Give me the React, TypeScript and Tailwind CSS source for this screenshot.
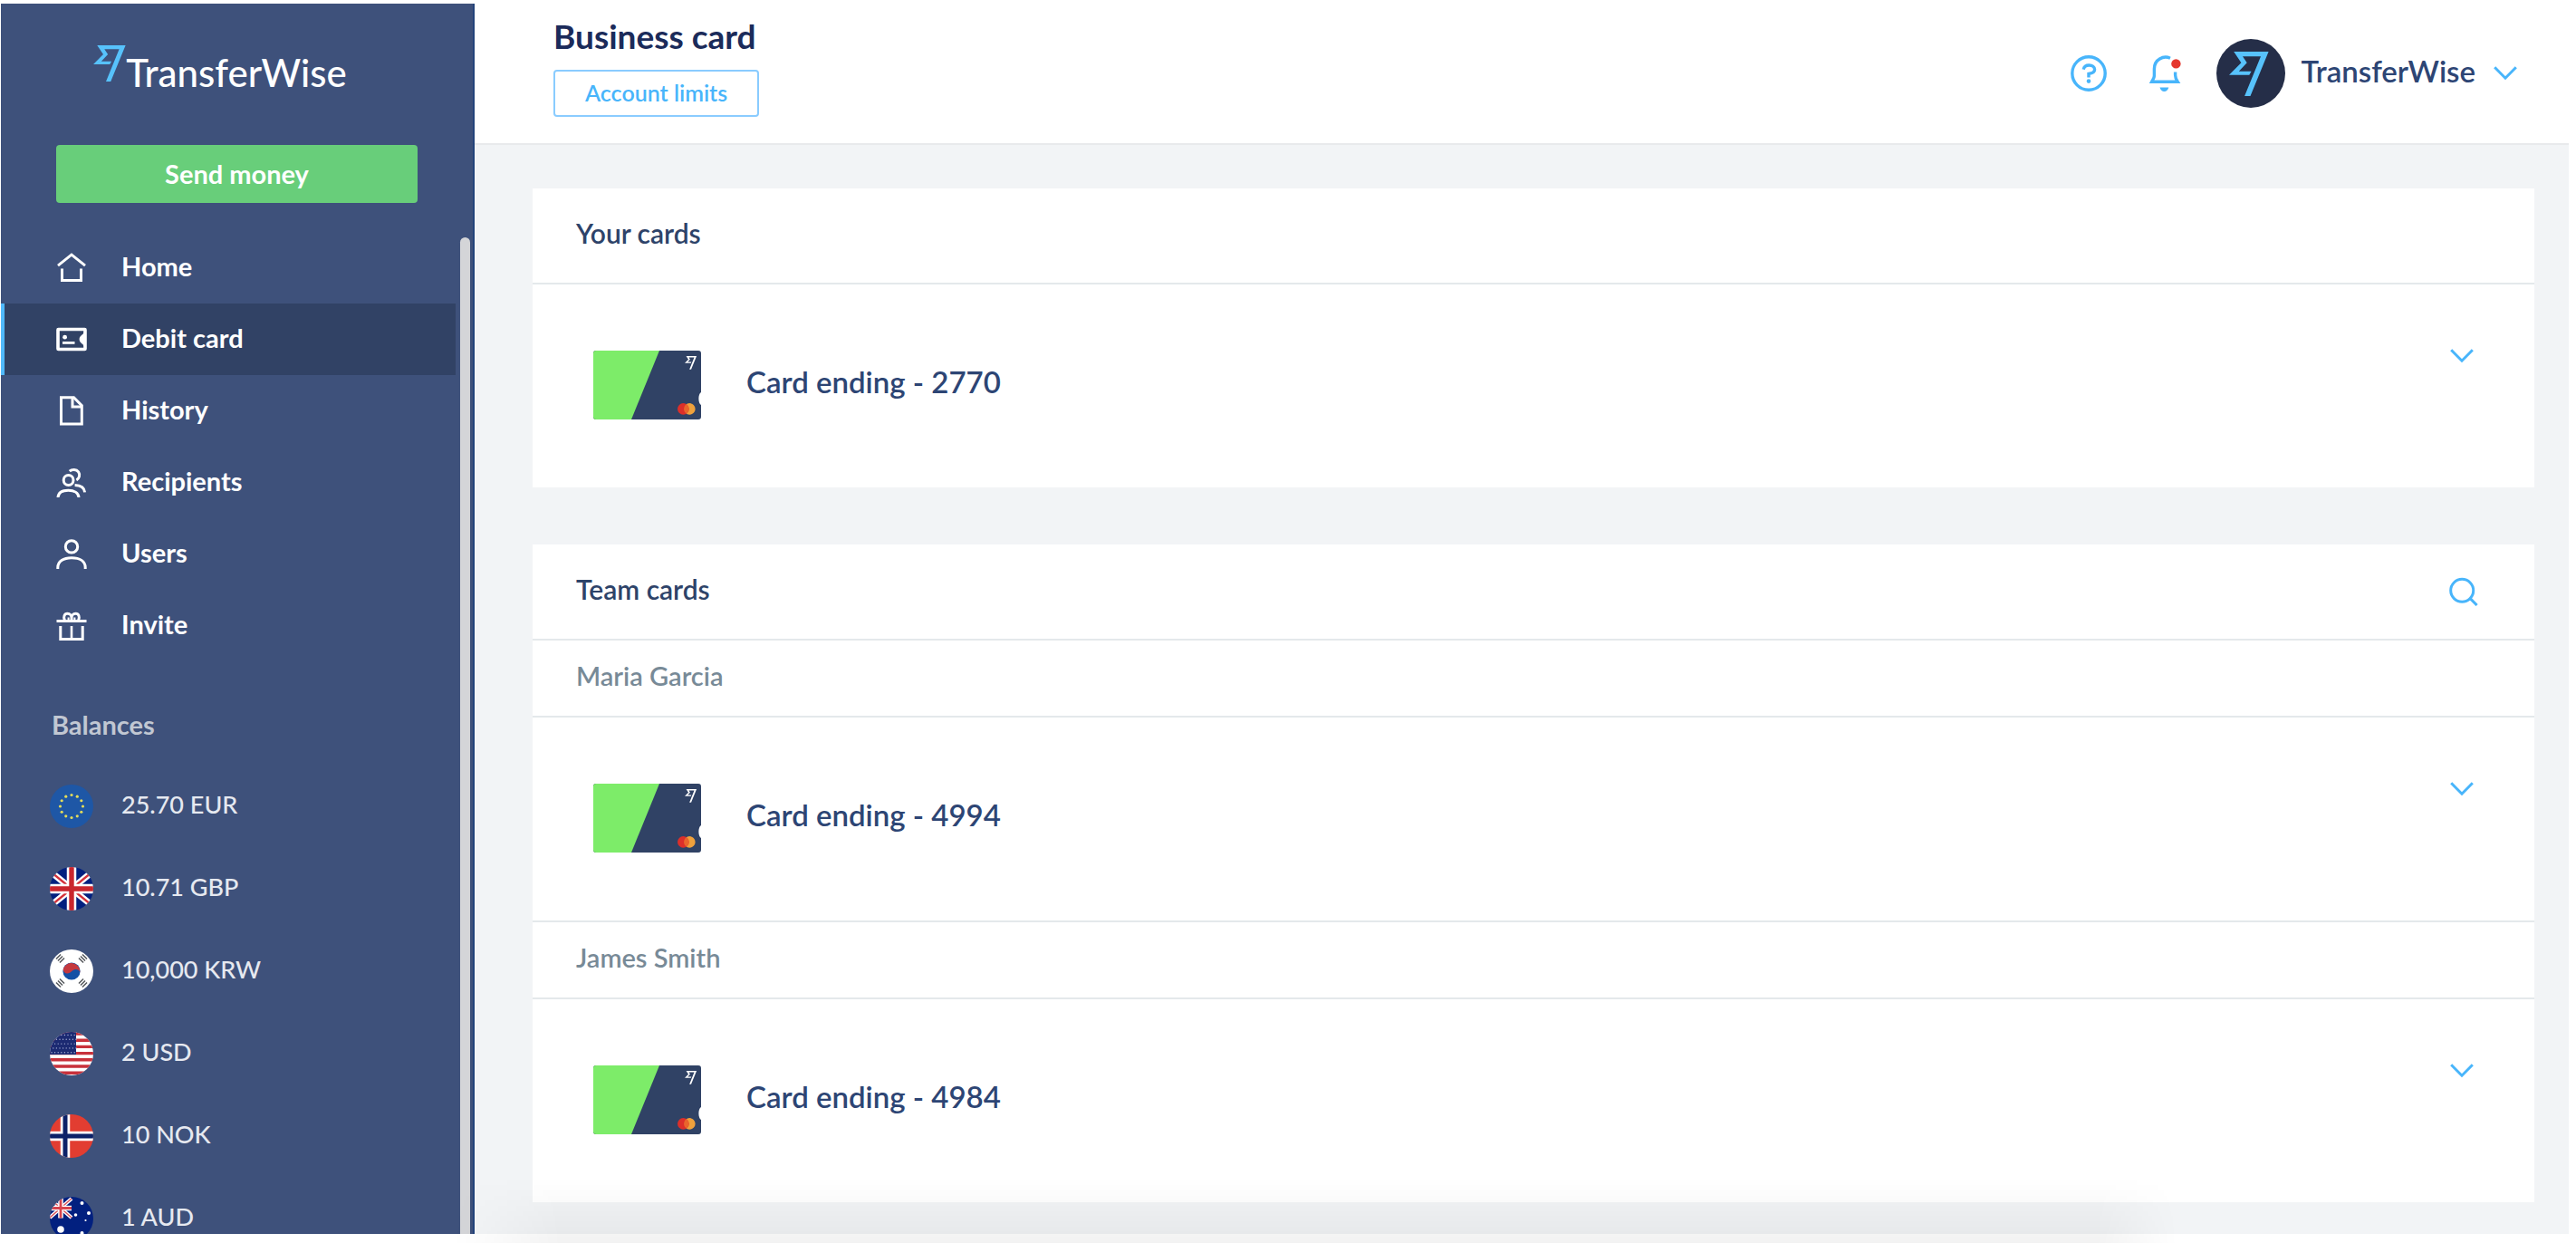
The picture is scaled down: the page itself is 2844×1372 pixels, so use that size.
import { useState } from 'react'
import type { ReactNode } from 'react'

const MARK_PATH =
  'M5.2 0H43.6L23.5 49H17.1L35 5.3H15L19.7 12.3L10.8 21.7H24.6L22.3 25.7H0L13.4 12.3Z'

function BrandMark({ className }: { className: string }) {
  return (
    <svg viewBox="0 0 44 49" className={className} fill="currentColor" aria-hidden="true">
      <path d={MARK_PATH} />
    </svg>
  )
}

function NavIcon({ children }: { children: ReactNode }) {
  return (
    <svg
      viewBox="0 0 34 34"
      className="w-[34px] h-[34px] shrink-0"
      fill="none"
      stroke="currentColor"
      strokeWidth="3"
      aria-hidden="true"
    >
      {children}
    </svg>
  )
}

const navItems = [
  {
    label: 'Home',
    icon: (
      <NavIcon>
        <path d="M2 14.2L17 2.2L32 14.2" />
        <path d="M6.5 17.5V30.5H27.5V17.5" />
      </NavIcon>
    ),
  },
  {
    label: 'Debit card',
    icon: (
      <NavIcon>
        <rect x="2" y="5.5" width="30" height="22" rx="0.5" strokeWidth="3.6" />
        <circle cx="9.6" cy="14.2" r="2.4" fill="currentColor" stroke="none" />
        <path d="M7 20.4H20.5" strokeWidth="2.8" />
        <path d="M31 7.5C31 11.5 25.6 12 25.6 16.5S31 21.5 31 25.5Z" fill="currentColor" stroke="none" />
      </NavIcon>
    ),
  },
  {
    label: 'History',
    icon: (
      <NavIcon>
        <path d="M5.5 1.8H19.5L28.3 10.6V31H5.5Z" />
        <path d="M18 2.3V12H28" />
      </NavIcon>
    ),
  },
  {
    label: 'Recipients',
    icon: (
      <NavIcon>
        <circle cx="13.6" cy="14" r="5.4" />
        <path d="M2 33C2.4 27.8 7 25.2 13.4 25.2S24.6 27.8 25 33" />
        <path d="M14.8 4.2C17.5 1.6 22.4 1.8 24.6 4.8C26.8 8 25.6 12.2 22.4 13.8" />
        <path d="M20.6 19.4C26.8 19.6 31.2 22.4 31.6 27.4" />
      </NavIcon>
    ),
  },
  {
    label: 'Users',
    icon: (
      <NavIcon>
        <circle cx="17" cy="8.4" r="6.7" />
        <path d="M1.8 33V31.6C1.8 24.6 8 20.8 17 20.8S32.2 24.6 32.2 31.6V33" />
      </NavIcon>
    ),
  },
  {
    label: 'Invite',
    icon: (
      <NavIcon>
        <path d="M0.5 11.5H33.5" />
        <path d="M4.8 17V31.5H29.2V17" />
        <path d="M17 17V31" strokeWidth="2.6" />
        <path d="M9.4 10.6C7.6 7 9.2 3.2 12.4 3.2C15.4 3.2 17 5.4 17 8V11V8C17 5.4 18.6 3.2 21.6 3.2C24.8 3.2 26.4 7 24.6 10.6" />
        <path d="M13.6 10.6V7.6M20.4 10.6V7.6" strokeWidth="2" />
      </NavIcon>
    ),
  },
]

function Flag({ id, children }: { id: string; children: ReactNode }) {
  return (
    <svg viewBox="0 0 48 48" className="w-12 h-12 shrink-0" aria-hidden="true">
      <clipPath id={`flag-${id}`}>
        <circle cx="24" cy="24" r="24" />
      </clipPath>
      <g clipPath={`url(#flag-${id})`}>{children}</g>
    </svg>
  )
}

const euStars = Array.from({ length: 12 }, (_, i) => {
  const a = (i * Math.PI) / 6
  return [24 + 12.5 * Math.sin(a), 24 - 12.5 * Math.cos(a)]
})

const usStars = Array.from({ length: 40 }, (_, i) => [
  2 + (i % 8) * 3.6 + (Math.floor(i / 8) % 2) * 1.8,
  3.5 + Math.floor(i / 8) * 4.8,
])

// one trigram per corner, turned to face the centre
const trigrams = [
  { x: 11.5, y: 10, turn: -45 },
  { x: 36.5, y: 10, turn: 45 },
  { x: 11.5, y: 37, turn: 45 },
  { x: 36.5, y: 37, turn: -45 },
]

const balances = [
  {
    label: '25.70 EUR',
    flag: (
      <Flag id="eur">
        <rect width="48" height="48" fill="#1e57a6" />
        {euStars.map(([x, y], i) => (
          <circle key={i} cx={x} cy={y} r="1.6" fill="#e3dc5a" />
        ))}
      </Flag>
    ),
  },
  {
    label: '10.71 GBP',
    flag: (
      <Flag id="gbp">
        <rect width="48" height="48" fill="#02207f" />
        <path d="M0 4.5L48 43.5M48 4.5L0 43.5" stroke="#fff" strokeWidth="7" />
        <path d="M0 4.5L48 43.5M48 4.5L0 43.5" stroke="#d3313a" strokeWidth="2.4" />
        <path d="M24 0V48M0 24H48" stroke="#fff" strokeWidth="10.5" />
        <path d="M24 0V48M0 24H48" stroke="#c9252d" strokeWidth="5.4" />
      </Flag>
    ),
  },
  {
    label: '10,000 KRW',
    flag: (
      <Flag id="krw">
        <rect width="48" height="48" fill="#fff" />
        <circle cx="24" cy="24" r="9.6" fill="#1450a5" />
        <path
          d="M14.6 22.2A9.6 9.6 0 0 1 33.4 25.8C33 21.5 27.6 20.6 24.6 23.8S16 28.2 14.6 22.2Z"
          fill="#c4383f"
        />
        {trigrams.map((t) => (
          <g key={`${t.x}-${t.y}`} transform={`translate(${t.x} ${t.y}) rotate(${t.turn})`}>
            <path d="M-3.6 -2.8H3.6M-3.6 0H3.6M-3.6 2.8H3.6" stroke="#55585c" strokeWidth="1.5" />
          </g>
        ))}
      </Flag>
    ),
  },
  {
    label: '2 USD',
    flag: (
      <Flag id="usd">
        <rect width="48" height="48" fill="#fff" />
        <path
          d="M0 2H48M0 9.2H48M0 16.4H48M0 23.6H48M0 30.8H48M0 38H48M0 45.2H48"
          stroke="#c8313b"
          strokeWidth="3.4"
        />
        <rect width="29" height="25" fill="#1c2a72" />
        {usStars.map(([x, y], i) => (
          <circle key={i} cx={x} cy={y} r="0.7" fill="#a9b1d6" />
        ))}
      </Flag>
    ),
  },
  {
    label: '10 NOK',
    flag: (
      <Flag id="nok">
        <rect width="48" height="48" fill="#e23d31" />
        <path d="M17 0V48M0 24H48" stroke="#fff" strokeWidth="10.5" />
        <path d="M17 0V48M0 24H48" stroke="#0c2168" strokeWidth="5" />
      </Flag>
    ),
  },
  {
    label: '1 AUD',
    flag: (
      <Flag id="aud">
        <rect width="48" height="48" fill="#02207f" />
        <path d="M0 2L24 23M24 2L0 23" stroke="#fff" strokeWidth="4" />
        <path d="M0 2L24 23M24 2L0 23" stroke="#d8545d" strokeWidth="1.4" />
        <path d="M12 0V23.5M0 12.5H24" stroke="#fff" strokeWidth="5.6" />
        <path d="M12 0V23.5M0 12.5H24" stroke="#d8444e" strokeWidth="2.8" />
        <circle cx="12" cy="36" r="3.8" fill="#fff" />
        <circle cx="35.5" cy="7" r="2" fill="#fff" />
        <circle cx="28.5" cy="20" r="1.8" fill="#fff" />
        <circle cx="43" cy="18" r="2" fill="#fff" />
        <circle cx="39.5" cy="26" r="1.1" fill="#fff" />
        <circle cx="35.5" cy="40" r="2" fill="#fff" />
      </Flag>
    ),
  },
]

function Chevron() {
  return (
    <svg
      viewBox="0 0 26 16"
      className="w-[26px] h-4"
      fill="none"
      stroke="currentColor"
      strokeWidth="3"
      aria-hidden="true"
    >
      <path d="M1.2 1.2L13 13.2L24.8 1.2" />
    </svg>
  )
}

function DebitCard() {
  return (
    <svg viewBox="0 0 119 76" className="w-[119px] h-[76px] shrink-0" aria-hidden="true">
      <path
        d="M3 0H116Q119 0 119 3V46C115.5 48 115.5 58 119 60V73Q119 76 116 76H3Q0 76 0 73V3Q0 0 3 0Z"
        fill="#304265"
      />
      <path d="M3 0H73L42 76H3Q0 76 0 73V3Q0 0 3 0Z" fill="#7dec69" />
      <g transform="translate(101 6) scale(0.3)" fill="#fff">
        <path d={MARK_PATH} />
      </g>
      <circle cx="106.3" cy="64.4" r="6.3" fill="#efa13c" />
      <circle cx="99.3" cy="64.4" r="6.3" fill="#dc2f2a" />
      <path d="M102.8 59.2A6.3 6.3 0 0 1 102.8 69.6A6.3 6.3 0 0 1 102.8 59.2Z" fill="#e9652c" />
    </svg>
  )
}

function CardRow({ ending }: { ending: string }) {
  const [open, setOpen] = useState(false)

  return (
    <div className="flex items-center h-56 pl-[67px] pr-[67px] pb-0.5">
      <DebitCard />
      <h3 className="ml-[50px] pb-2 text-[33px] leading-[40px] font-semibold text-[#2d4574]">
        Card ending - {ending}
      </h3>
      <button
        onClick={() => setOpen(!open)}
        aria-expanded={open}
        aria-label={`Show card ${ending}`}
        className="ml-auto mt-[71px] self-start text-[#48b5fb]"
      >
        <Chevron />
      </button>
    </div>
  )
}

function PanelTitle({ title, children }: { title: string; children?: ReactNode }) {
  return (
    <div className="flex items-center justify-between h-[106px] border-b-2 border-[#e4e9eb] pl-12 pr-[62px]">
      <h2 className="pb-1.5 text-[30px] leading-[36px] font-semibold text-[#2e4369]">{title}</h2>
      {children}
    </div>
  )
}

const team = [
  { name: 'Maria Garcia', ending: '4994' },
  { name: 'James Smith', ending: '4984' },
]

function Sidebar() {
  const [active, setActive] = useState('Debit card')

  return (
    <aside className="flex flex-col w-[523px] shrink-0 overflow-hidden bg-[#3e517b] border-r-2 border-[#23437a] text-white">
      <a href="#" className="flex items-start justify-center pt-[46px] pr-[37px]">
        <BrandMark className="w-9 h-10 text-[#57c2fb]" />
        <span className="mt-[5px] text-[42px] leading-[50px] font-medium">TransferWise</span>
      </a>
      <button className="mx-[61px] mt-[55px] h-16 shrink-0 rounded bg-[#68ce7a] text-[29px] leading-[36px] font-bold">
        Send money
      </button>

      <div className="flex flex-1 min-h-0 mt-8">
        <div className="flex-1 min-w-0">
          <nav>
            {navItems.map((item) => (
              <a
                key={item.label}
                href="#"
                onClick={() => setActive(item.label)}
                className={`flex items-center h-[79px] gap-[38px] border-l-4 pl-[57px] text-[29px] leading-[36px] font-bold ${
                  active === item.label
                    ? 'border-[#50b9fb] bg-[#314265]'
                    : 'border-transparent'
                }`}
              >
                {item.icon}
                <span className="pb-1">{item.label}</span>
              </a>
            ))}
          </nav>

          <h2 className="mt-[50px] mb-[24px] pl-14 text-[29px] leading-[40px] font-bold text-[#c1c7d2]">
            Balances
          </h2>
          <ul>
            {balances.map((b) => (
              <li key={b.label}>
                <a
                  href="#"
                  className="flex items-center h-[91px] gap-[31px] pl-[54px] text-[27px] leading-[36px] font-medium text-[#e6e9f0]"
                >
                  {b.flag}
                  <span className="pb-1">{b.label}</span>
                </a>
              </li>
            ))}
          </ul>
        </div>
        {/* scroll thumb */}
        <div className="w-[11px] ml-[5px] mr-[3px] mt-1.5 shrink-0 rounded-t-full bg-[#d4d5d8]" />
      </div>
    </aside>
  )
}

function Header() {
  return (
    <header className="flex items-center justify-between h-[156px] bg-white border-b-2 border-[#e8eaec] pl-[87px] pr-[57px]">
      <div className="flex flex-col items-start gap-[15px] pb-4">
        <h1 className="text-[37px] leading-[44px] font-bold text-[#1b2b5a]">Business card</h1>
        <button className="h-[52px] rounded border-2 border-[#8accff] px-[33px] pb-0.5 text-[25px] leading-[32px] font-semibold text-[#48b5fb]">
          Account limits
        </button>
      </div>

      <div className="flex items-center text-[#48b5fb]">
        <button aria-label="Help">
          <svg viewBox="0 0 40 40" className="w-10 h-10" fill="none" stroke="currentColor" strokeWidth="3.4">
            <circle cx="20" cy="20" r="18.2" />
            <path d="M14.2 15.6C15 12.2 17.4 11 20.4 11C24 11 26.6 13 26.6 15.8C26.6 19.2 23.6 20 20 20.4V24.4" />
            <circle cx="20" cy="28.6" r="2.3" fill="currentColor" stroke="none" />
          </svg>
        </button>
        <button aria-label="Notifications" className="ml-11">
          <svg viewBox="0 0 40 40" className="w-10 h-10" fill="none" stroke="currentColor" strokeWidth="3.4">
            <path d="M26 3.2C18.5 0 8.4 4.4 8.4 15V22.5C8.4 25.5 7 26.5 5.6 29.2H34.2C32.4 26.5 31.6 25 31.6 22V18.5" />
            <path d="M14.5 35.6H24.3Q23 40 19.4 40T14.5 35.6Z" fill="currentColor" stroke="none" />
            <circle cx="32.4" cy="9.4" r="5.2" fill="#e5372e" stroke="none" />
          </svg>
        </button>
        <button className="flex items-center ml-[37px]">
          <span className="flex items-center justify-center w-[76px] h-[76px] rounded-full bg-[#252e48]">
            <BrandMark className="w-11 h-[49px] mr-1 text-[#57c2fb]" />
          </span>
          <span className="ml-[18px] mr-5 pb-1.5 text-[33px] leading-[40px] font-semibold text-[#2d4574]">
            TransferWise
          </span>
          <Chevron />
        </button>
      </div>
    </header>
  )
}

export default function App() {
  return (
    <div className="relative flex h-screen overflow-hidden bg-white pt-1 pl-px pr-2 pb-[10px] font-[Lato,sans-serif]">
      <Sidebar />

      <main className="flex-1 min-w-0 bg-[#f2f4f6]">
        <Header />
        <div className="flex flex-col gap-[63px] pt-12 pl-16 pr-[38px]">
          <section className="bg-white">
            <PanelTitle title="Your cards" />
            <CardRow ending="2770" />
          </section>

          <section className="bg-white">
            <PanelTitle title="Team cards">
              <button aria-label="Search team cards" className="text-[#48b5fb]">
                <svg viewBox="0 0 32 32" className="w-8 h-8" fill="none" stroke="currentColor" strokeWidth="3">
                  <circle cx="14.2" cy="14.8" r="12.5" />
                  <path d="M23.2 23.6L30.6 31" />
                </svg>
              </button>
            </PanelTitle>
            {team.map((member, i) => (
              <div key={member.name} className={i > 0 ? 'border-t-2 border-[#e4e9eb]' : ''}>
                <h3 className="h-[85px] border-b-2 border-[#e4e9eb] pl-12 text-[29px] leading-[78px] font-semibold text-[#788a97]">
                  {member.name}
                </h3>
                <CardRow ending={member.ending} />
              </div>
            ))}
          </section>
        </div>
      </main>

      {/* soft shadow along the lower edge */}
      <div className="absolute bottom-0 left-[500px] right-[440px] h-[72px] pointer-events-none bg-linear-to-t from-black/5 to-transparent mask-[linear-gradient(to_right,transparent,black_120px,black_calc(100%-90px),transparent)]" />
    </div>
  )
}
